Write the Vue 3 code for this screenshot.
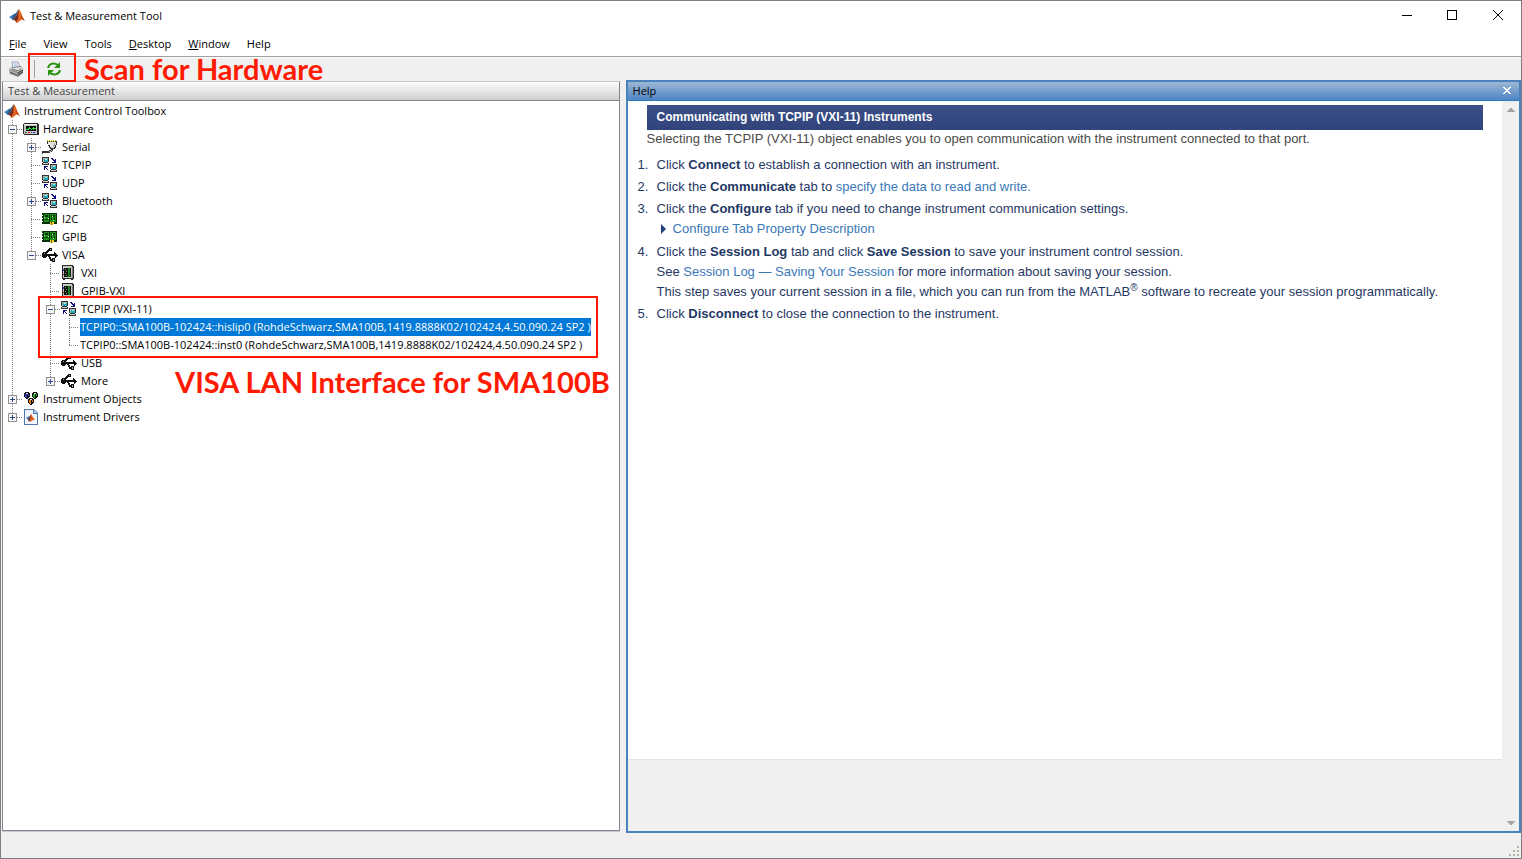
<script setup>
import { ref } from 'vue'

const menus = [
  { key: 'F', rest: 'ile' },
  { key: '', rest: 'View' },
  { key: '', rest: 'Tools' },
  { key: 'D', rest: 'esktop' },
  { key: 'W', rest: 'indow' },
  { key: '', rest: 'Help' },
]

// Guide codes: | line, T branch, L last branch, + closed, - open, P closed last, M open last, _ blank
const rows = [
  { guides: '', icon: 'matlab', label: 'Instrument Control Toolbox' },
  { guides: '-', icon: 'hardware', label: 'Hardware' },
  { guides: '|+', icon: 'serial', label: 'Serial' },
  { guides: '|T', icon: 'network', label: 'TCPIP' },
  { guides: '|T', icon: 'network', label: 'UDP' },
  { guides: '|+', icon: 'network', label: 'Bluetooth' },
  { guides: '|T', icon: 'card', label: 'I2C' },
  { guides: '|T', icon: 'card', label: 'GPIB' },
  { guides: '|M', icon: 'usb', label: 'VISA' },
  { guides: '|_T', icon: 'rack', label: 'VXI' },
  { guides: '|_T', icon: 'rack', label: 'GPIB-VXI' },
  { guides: '|_-', icon: 'network', label: 'TCPIP (VXI-11)' },
  { guides: '|_|T', icon: '', label: 'TCPIP0::SMA100B-102424::hislip0 (RohdeSchwarz,SMA100B,1419.8888K02/102424,4.50.090.24 SP2 )' },
  { guides: '|_|L', icon: '', label: 'TCPIP0::SMA100B-102424::inst0 (RohdeSchwarz,SMA100B,1419.8888K02/102424,4.50.090.24 SP2 )' },
  { guides: '|_T', icon: 'usb', label: 'USB' },
  { guides: '|_P', icon: 'usb', label: 'More' },
  { guides: '+', icon: 'objects', label: 'Instrument Objects' },
  { guides: 'P', icon: 'drivers', label: 'Instrument Drivers' },
]
const selected = ref(12)

const matlab = [
  { d: 'M0 9 5 6l2 2-3 4z', f: '#3a7fb8' },
  { d: 'M5 6c2 0 3-3 5-5L7 8l-3 4-1-1z', f: '#2c5c90' },
  { d: 'M4 12 7 8l3-7v9l-3 5c0-2-1-3-3-3z', f: '#7a2a1c' },
  { d: 'M10 1c2 2 3 8 6 12-2-1-3-2-4-1-2 1-3 3-5 3l2-4z', f: '#e2601e' },
  { d: 'M10 1c1 3 1 6 0 9l-2 4c2-2 3-6 2-13z', f: '#f8b050' },
  { d: 'M11 4c1 3 3 7 5 9l-3-2z', f: '#b02c10' },
]

const icons = {
  matlab,
  hardware: [
    { d: 'M1 2h14v1h1v11H1v-1H0V3h1z', f: '#2a2a2a' },
    { d: 'M1 3h13v10H1z', f: '#c4c4c4' },
    { d: 'M1 3h13v1H1z', f: '#eee' },
    { d: 'M3 5h10v5H3z', f: '#080808' },
    { d: 'M3 8h2V7h1V6h1v1h1v1h1V7h1V6h1v1h2v1h-2v1h-1V8h-1v1H8V8H6v1H3z', f: '#30e030' },
    { d: 'M2 11h2v1H2zM8 11h1v1H8z', f: '#555' },
    { d: 'M5 11h2v1H5z', f: '#e02020' },
    { d: 'M10 11h2v1h-2z', f: '#2040d0' },
  ],
  serial: [
    { d: 'M5 2h10v4h-1v3h-1v1h-2v2h-1v1H8v1H1v1H0v-3h7v-1h2v-1H8V9H7V7H6V5H5z', f: '#333' },
    { d: 'M6 3h8v3h-1v2h-1v1H9V8H8V6H6z', f: '#e4e4e0' },
    { d: 'M12 4h1v3h-1v1h-1V6h1zM2 13h5v-1h2v-1h1v1H9v1H2z', f: '#a4a4a4' },
    { d: 'M5 1h1v1H5zM7 1h1v1H7zM9 1h1v1H9zM11 1h1v1h-1zM13 1h1v1h-1zM6 2h1v1H6zM8 2h1v1H8zM10 2h1v1h-1zM12 2h1v1h-1z', f: '#d8d020' },
  ],
  network: [
    { d: 'M0 0h7v5H6v1h1v2H0V6h1V5H0zM8 7h7v5h-1v1h1v2H8v-2h1v-1H8z', f: '#333' },
    { d: 'M1 6h5v1H1zM9 13h5v1H9z', f: '#d0d0c8' },
    { d: 'M1 1h1v4H1zM2 1h4v1H2zM9 8h1v4H9zM10 8h4v1h-4z', f: '#b4b4ac' },
    { d: 'M2 2h4v3H2zM10 9h4v3h-4z', f: '#20a8b8' },
    { d: 'M3 2h2v1H3zM11 9h2v1h-2z', f: '#a0f0f0' },
    { d: 'M9 1h2v1h1v1h1V2h1v4h-4V5h2V4h-1V3h-1V2H9zM2 9h4v1H4v1h1v1h1v1H5v-1H4v-1H3v2H2z', f: '#10107c' },
  ],
  card: [
    { d: 'M0 2h15v11H0z', f: '#0a300a' },
    { d: 'M2 3h5v8H2zM8 3h6v8H8z', f: '#189018' },
    { d: 'M3 4h3v2H3zM3 8h3v1H3zM9 4h1v2H9zM11 4h2v2h-2zM9 7h1v2H9zM12 7h1v2h-1z', f: '#0a300a' },
    { d: 'M2 6h1v1H2zM6 7h1v1H6zM10 5h1v1h-1zM11 9h1v1h-1z', f: '#b8f0a0' },
    { d: 'M0 4h1v1H0zM0 7h1v1H0zM0 10h1v1H0z', f: '#fff' },
    { d: 'M8 11h4v2h-1v1H8z', f: '#f0d020' },
    { d: 'M9 11h1v3H9z', f: '#786008' },
  ],
  usb: [
    { d: 'M1 5h3v1h1v1h7V5h1v1h1v1h1v1h1v1h-1v1h-1v1h-1V9H5v1H4v1H1v-1H0V6h1z', f: '#111' },
    { d: 'M3 6V5h1V4h1V3h1V2h1V1h3v3H7v1H6v1H5v1H4zM6 8h2v2h1v2h1v-1h3v4h-3v-1H8v-2H7v-2H6z', f: '#111' },
    { d: 'M2 6h1v1H2zM8 2h1v1H8zM11 12h1v2h-1z', f: '#aaa' },
  ],
  rack: [
    { d: 'M1 0h10l2 2v12h-1v1h-2v-1H4v1H2v-1H1z', f: '#2a2a2a' },
    { d: 'M2 1h9v12H2z', f: '#c8c8c4' },
    { d: 'M11 2h1v11h-1z', f: '#777' },
    { d: 'M3 3h7v9H3z', f: '#111' },
    { d: 'M7 3h2v9H7z', f: '#188018' },
    { d: 'M4 4h1v1H4zM5 6h1v1H5zM4 8h1v1H4zM5 10h1v1H5z', f: '#50b050' },
    { d: 'M2 4h1v2H2z', f: '#2038d0' },
    { d: 'M2 9h1v1H2z', f: '#d02020' },
  ],
  objects: [
    { d: 'M2 1h4v1h1v4H6v1H5v1H3V7H2V6H1V2h1zM10 1h4v1h1v4h-1v1h-1v1h-2V7h-1V6H9V2h1zM6 7h4v1h1v4h-1v1H9v1H7v-1H6v-1H5V8h1z', f: '#111' },
    { d: 'M2 3h2v4H3V6H2zM5 3h1v2H5z', f: '#3838c8' },
    { d: 'M10 3h2v4h-1V6h-1zM13 3h1v2h-1z', f: '#20a820' },
    { d: 'M6 9h2v4H7v-1H6zM9 9h1v2H9z', f: '#d87818' },
    { d: 'M3 2h2v1H3zM11 2h2v1h-2zM7 8h2v1H7z', f: '#eee' },
  ],
  drivers: [
    { d: 'M1 0h10l4 4v12H1z', f: '#5078b0' },
    { d: 'M2 1h8v4h4v10H2z', f: '#f2f7ff' },
    { d: 'M11 1l3 3h-3z', f: '#b8d0f0' },
    { d: 'M3 9l3-2 1 1-2 3z', f: '#3a7fb8' },
    { d: 'M5 11l3-6v5l-2 3z', f: '#7a2a1c' },
    { d: 'M8 5c1 1 2 4 4 6l-2 0-3 2z', f: '#e2601e' },
  ],
}

const branchLines = {
  '|': 'M9.5 0V18',
  T: 'M9.5 0V18M9 9.5H19',
  L: 'M9.5 0V10M9 9.5H19',
  '+': 'M9.5 0V18M14 9.5H19',
  '-': 'M9.5 0V18M14 9.5H19',
  P: 'M9.5 0V9M14 9.5H19',
  M: 'M9.5 0V9M14 9.5H19',
  _: '',
}
</script>

<template>
  <div class="window">
    <header class="titlebar">
      <svg class="icon" viewBox="0 0 16 16"><path v-for="(p, i) in matlab" :key="i" :d="p.d" :fill="p.f" /></svg>
      <h1>Test &amp; Measurement Tool</h1>
      <div class="controls">
        <button aria-label="Minimize"><svg viewBox="0 0 12 12"><path d="M2 5.500h10" /></svg></button>
        <button aria-label="Maximize"><svg viewBox="0 0 12 12"><path d="M1.500 .500h9v9h-9z" /></svg></button>
        <button aria-label="Close"><svg class="smooth" viewBox="0 0 12 12"><path d="M1 0l10 10M11 0 1 10" /></svg></button>
      </div>
    </header>

    <nav class="menubar">
      <button v-for="m in menus" :key="m.rest"><span><u v-if="m.key">{{ m.key }}</u>{{ m.rest }}</span></button>
    </nav>

    <div class="toolbar">
      <button aria-label="Print">
        <svg viewBox="0 0 16 16">
          <path d="M4 1h6l2 5-7 1z" fill="#fff" stroke="#9aa4b4" />
          <path d="M5.500 3h4M6 5h4" stroke="#88a8d8" />
          <path d="M1 8l3-2 9-1 2 3v4l-5 4-8-3z" fill="#888" />
          <path d="M1 8l3-1 9-1 2 2-5 3z" fill="#e0e0de" />
          <path d="M1 9l8 3v3l-7-3z" fill="#bbb" />
          <path d="M2 11l7 3M10 12l5-3M10 14l5-3" stroke="#444" />
          <path d="M4 8l6 2 3-2" stroke="#666" fill="none" />
        </svg>
      </button>
      <span class="separator"></span>
      <button aria-label="Scan for hardware" class="scan">
        <svg viewBox="0 0 16 16" fill="none" stroke="#2b9410" stroke-width="2">
          <path d="M2 7C3 2 9 1 13 5M14 9c-1 5-7 6-11 2" />
          <path d="M14 1v6H8zM2 15V9h6z" fill="#2b9410" stroke="none" />
        </svg>
      </button>
      <div class="mark mark-scan"></div>
      <strong class="note">Scan for Hardware</strong>
    </div>

    <main>
      <section class="tree-panel">
        <h2>Test &amp; Measurement</h2>
        <ul class="tree" role="tree">
          <li v-for="(row, i) in rows" :key="i" role="treeitem" :aria-selected="selected === i" @click="selected = i">
            <svg v-for="(g, n) in row.guides.split('')" :key="n" class="guide" viewBox="0 0 19 18">
              <path :d="branchLines[g]" stroke="#808080" stroke-dasharray="1 1" />
              <g v-if="'+-PM'.includes(g)">
                <rect x="5.500" y="5.500" width="8" height="8" fill="#f6f6f6" stroke="#919191" />
                <path d="M7 9.500h5" stroke="#2b4a90" />
                <path v-if="g === '+' || g === 'P'" d="M9.500 7v5" stroke="#2b4a90" />
              </g>
            </svg>
            <svg v-if="row.icon" class="icon" :class="{ crisp: row.icon !== 'matlab' && row.icon !== 'drivers' }" viewBox="0 0 16 16">
              <path v-for="(p, k) in icons[row.icon]" :key="k" :d="p.d" :fill="p.f" />
            </svg>
            <span class="label" :class="{ leaf: !row.icon, selected: selected === i }">{{ row.label }}</span>
          </li>
        </ul>
        <div class="mark mark-visa"></div>
        <strong class="note note-visa">VISA LAN Interface for SMA100B</strong>
      </section>

      <section class="help-panel">
        <div class="help-title">
          <h2>Help</h2>
          <button aria-label="Close help"><svg viewBox="0 0 8 8"><path d="M0 0h2v1h1v1h2V1h1V0h2v1H7v1H6v1H5v1h1v1h1v1h1v1H6V6H5V5H3v1H2v1H0V6h1V5h1V4h1V3H2V2H1V1H0z" fill="#fff" /></svg></button>
        </div>
        <div class="help-body">
          <div class="help-view">
            <article>
              <h3>Communicating with TCPIP (VXI-11) Instruments</h3>
              <p>Selecting the TCPIP (VXI-11) object enables you to open communication with the instrument connected to that port.</p>
              <ol>
                <li><div>Click <b>Connect</b> to establish a connection with an instrument.</div></li>
                <li><div>Click the <b>Communicate</b> tab to <a href="#data">specify the data to read and write.</a></div></li>
                <li>
                  <div>Click the <b>Configure</b> tab if you need to change instrument communication settings.
                    <div class="expander"><svg viewBox="0 0 6 10"><path d="M0 0l5 5-5 5z" fill="#24407c" /></svg><a href="#configure">Configure Tab Property Description</a></div>
                  </div>
                </li>
                <li>
                  <div>Click the <b>Session Log</b> tab and click <b>Save Session</b> to save your instrument control session.<br>
                    See <a href="#log">Session Log — Saving Your Session</a> for more information about saving your session.<br>
                    This step saves your current session in a file, which you can run from the MATLAB<sup>®</sup> software to recreate your session programmatically.</div>
                </li>
                <li><div>Click <b>Disconnect</b> to close the connection to the instrument.</div></li>
              </ol>
            </article>
          </div>
          <div class="scrollbar">
            <button aria-label="Scroll up"><svg viewBox="0 0 8 4"><path d="M3 0h2v1h1v1h1v1h1v1H0V3h1V2h1V1h1z" fill="#a3a3a3" /></svg></button>
            <button aria-label="Scroll down"><svg viewBox="0 0 8 4"><path d="M0 0h8v1H7v1H6v1H5v1H3V3H2V2H1V1H0z" fill="#a3a3a3" /></svg></button>
          </div>
        </div>
      </section>
    </main>

    <footer>
      <svg viewBox="0 0 12 12"><path d="M9 1h2v2H9zM5 5h2v2H5zM9 5h2v2H9zM1 9h2v2H1zM5 9h2v2H5zM9 9h2v2H9z" fill="#b4b4a4" /></svg>
    </footer>
  </div>
</template>

<style>
body {
  background: #f0f0f0;
}
</style>

<style scoped>
* {
  box-sizing: border-box;
}
.window {
  display: flex;
  flex-direction: column;
  height: 100vh;
  border: 1px solid #7f7f7f;
  background: #f0f0f0;
  color: #000;
  font: 11px/18px "Open Sans", "Noto Sans", sans-serif;
}
button {
  display: flex;
  align-items: center;
  justify-content: center;
  padding: 0;
  border: 0;
  background: none;
  color: inherit;
  font: inherit;
}
h1, h2, h3, p, ul, ol {
  margin: 0;
  padding: 0;
  font-size: 11px;
  font-weight: 400;
}
svg {
  display: block;
  flex: none;
}
.icon {
  width: 16px;
  height: 16px;
}
.crisp, .guide, .help-title svg, .scrollbar svg, footer svg {
  shape-rendering: crispEdges;
}
.titlebar {
  display: flex;
  align-items: center;
  flex: none;
  gap: 5px;
  height: 29px;
  padding-left: 8px;
  background: #fff;
}
.controls {
  display: flex;
  margin-left: auto;
}
.controls button {
  width: 46px;
  height: 29px;
}
.controls svg {
  width: 12px;
  height: 12px;
  fill: none;
  stroke: #000;
  shape-rendering: crispEdges;
}
.controls .smooth {
  shape-rendering: auto;
}
.menubar {
  display: flex;
  flex: none;
  gap: 17px;
  height: 27px;
  padding: 2px 8px 0;
  border-bottom: 1px solid #a0a0a0;
  background: #fff;
}
.toolbar {
  position: relative;
  z-index: 1;
  display: flex;
  align-items: center;
  flex: none;
  height: 23px;
  padding-left: 7px;
  border-top: 1px solid #fff;
}
.toolbar svg {
  width: 16px;
  height: 16px;
}
.separator {
  width: 1px;
  height: 18px;
  margin: 0 11px 0 10px;
  background: #a0a0a0;
}
.mark {
  position: absolute;
  border: 2px solid #ff1a00;
  pointer-events: none;
}
.mark-scan {
  top: -5px;
  left: 27px;
  width: 48px;
  height: 29px;
}
.note {
  margin-left: 22px;
  color: #ff1a00;
  font: 700 29px/24px Lato, sans-serif;
  white-space: nowrap;
}
main {
  display: flex;
  flex: 1;
  gap: 6px;
  min-height: 0;
}
.tree-panel {
  position: relative;
  display: flex;
  flex-direction: column;
  flex: 618 1 0;
  min-width: 0;
  margin: 1px 0 2px 1px;
  border: 1px solid #82858f;
  border-top-color: #c8c8c8;
  box-shadow: 0 1px #c4c8d0;
}
.tree-panel h2 {
  flex: none;
  height: 19px;
  padding-left: 5px;
  border-bottom: 1px solid #82858f;
  background: linear-gradient(#fdfdfd, #cfcfcf);
  color: #444;
}
.tree {
  flex: 1;
  padding-top: 1px;
  background: #fff;
  list-style: none;
}
.tree li {
  display: flex;
  align-items: center;
  height: 18px;
  white-space: nowrap;
}
.tree .icon {
  margin: 0 4px 0 1px;
}
.guide {
  width: 19px;
  height: 18px;
  fill: none;
}
.leaf {
  margin-left: 1px;
}
.selected {
  background: #0078d7;
  color: #fff;
}
.mark-visa {
  top: 214px;
  left: 35px;
  width: 560px;
  height: 62px;
}
.note-visa {
  position: absolute;
  top: 288px;
  left: 150px;
}
.help-panel {
  display: flex;
  flex-direction: column;
  flex: 895 1 0;
  min-width: 0;
  border: 2px solid #4a82bd;
}
.help-title {
  display: flex;
  align-items: center;
  justify-content: space-between;
  flex: none;
  height: 19px;
  padding: 0 8px 0 5px;
  border-bottom: 1px solid #2e7cba;
  background: linear-gradient(#9cb7d4, #4f86c6);
}
.help-title svg {
  width: 8px;
  height: 8px;
}
.help-body {
  display: flex;
  flex: 1;
  min-height: 0;
}
.help-view {
  flex: 1;
  min-width: 0;
  padding-bottom: 71px;
}
article {
  height: 100%;
  padding: 4px 19px 0;
  border-bottom: 1px solid #e3e3e3;
  background: #fff;
  color: #1f3864;
  font: 13px/20px "Liberation Sans", Arial, sans-serif;
}
h3 {
  height: 25px;
  padding-left: 10px;
  background: linear-gradient(#3b5089, #30437a);
  color: #fff;
  font-size: 12px;
  font-weight: 700;
  line-height: 24px;
}
p {
  margin-bottom: 7px;
  color: #4a4a4a;
  font-size: 13px;
  line-height: 18px;
}
ol {
  display: grid;
  gap: 2px;
  margin-left: -9px;
  font-size: 13px;
  list-style: none;
  counter-reset: step;
}
ol li {
  display: grid;
  grid-template-columns: 19px 1fr;
  counter-increment: step;
}
ol li::before {
  content: counter(step) ".";
}
a {
  color: #3a78b8;
  text-decoration: none;
}
sup {
  font-size: 10px;
  line-height: 0;
}
.expander {
  display: flex;
  align-items: center;
  gap: 6px;
  padding: 0 0 1px 4px;
}
.expander svg {
  width: 6px;
  height: 10px;
}
.scrollbar {
  display: flex;
  flex-direction: column;
  justify-content: space-between;
  flex: none;
  width: 17px;
}
.scrollbar button {
  height: 17px;
}
.scrollbar svg {
  width: 8px;
  height: 4px;
}
footer {
  display: flex;
  align-items: flex-end;
  justify-content: flex-end;
  flex: none;
  height: 25px;
  padding: 1px;
}
footer svg {
  width: 12px;
  height: 12px;
}
</style>
